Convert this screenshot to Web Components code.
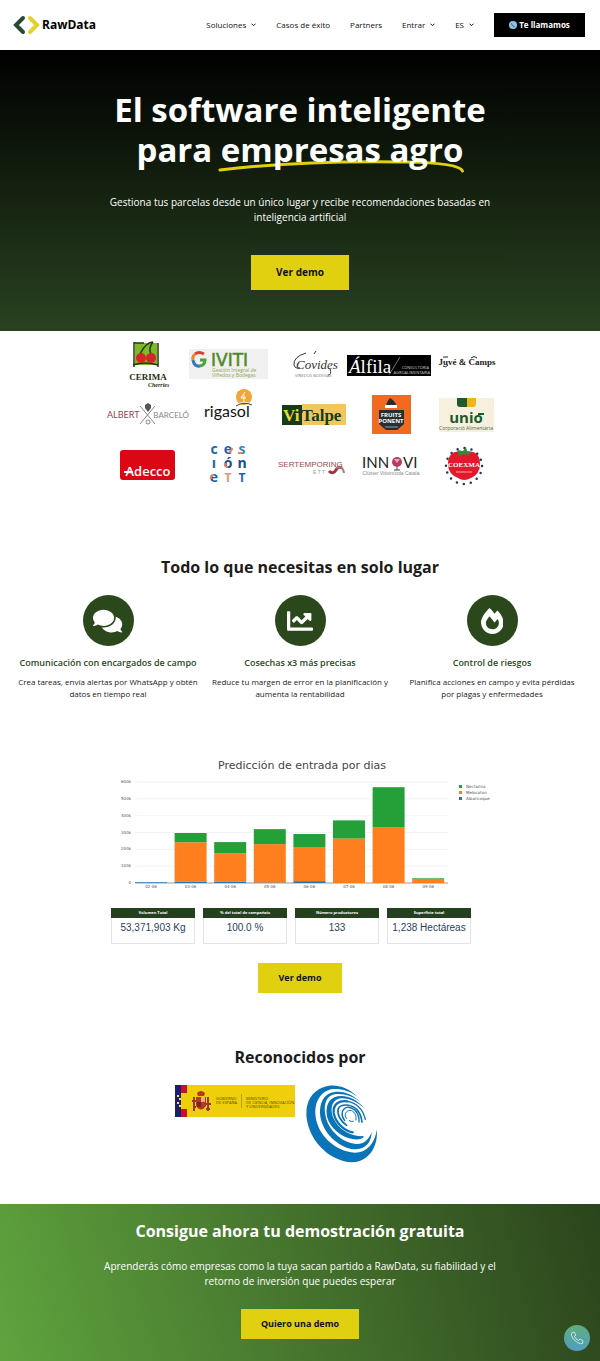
<!DOCTYPE html>
<html lang="es">
<head>
<meta charset="utf-8">
<meta name="viewport" content="width=device-width, initial-scale=1">
<title>RawData</title>
<style>
  body { margin: 0; background: #fff; color: #1c1c1c; font-family: "Open Sans", "Noto Sans", sans-serif; font-size: 10px; }
</style>
</head>
<body>
<raw-page></raw-page>

<template id="raw-page">
  <style>
    :host { display: block; }
    h2 { margin: 0; font-size: 16px; line-height: 24px; font-weight: 700; text-align: center; }
    .features { padding: 66px 12px 0; }
    .cols { display: grid; grid-template-columns: repeat(3, 1fr); margin-top: 16px; }
    .data { padding: 56px 16px 0; display: flex; flex-direction: column; align-items: center; }
    .stats { display: flex; gap: 8px; margin: 16px 18px 19px 0; }
    .known { padding: 52px 16px 41px; }
    .badges { display: flex; justify-content: center; align-items: flex-start; gap: 11px; margin: 16px 48px 0 0; }
    svg { display: block; }
  </style>
  <site-header></site-header>
  <main>
    <hero-banner></hero-banner>
    <client-logos></client-logos>
    <section class="features">
      <h2>Todo lo que necesitas en solo lugar</h2>
      <div class="cols">
        <feature-card>
          <svg slot="icon" height="26" viewBox="0 0 576 512" fill="#fff"><path d="M416 192c0-88.4-93.1-160-208-160S0 103.6 0 192c0 34.3 14.1 65.9 38 92-13.4 30.2-35.5 54.2-35.8 54.5-2.2 2.3-2.8 5.7-1.5 8.7S4.8 352 8 352c36.6 0 66.9-12.3 88.7-25 32.2 15.7 70.3 25 111.3 25 114.9 0 208-71.6 208-160zm122 220c23.9-26 38-57.7 38-92 0-66.9-53.5-124.2-129.3-148.1.9 6.6 1.3 13.3 1.3 20.1 0 105.9-107.7 192-240 192-10.8 0-21.3-.8-31.7-1.9C207.8 439.6 281.8 480 368 480c41 0 79.1-9.2 111.3-25 21.8 12.7 52.1 25 88.7 25 3.2 0 6.1-1.9 7.3-4.8 1.3-2.9.7-6.3-1.5-8.7-.3-.3-22.4-24.2-35.8-54.5z"/></svg>
          <span slot="title">Comunicación con encargados de campo</span>
          Crea tareas, envía alertas por WhatsApp y obtén datos en tiempo real
        </feature-card>
        <feature-card>
          <svg slot="icon" height="26" viewBox="0 0 512 512" fill="#fff"><path d="M496 384H64V80c0-8.840-7.160-16-16-16H16C7.160 64 0 71.160 0 80v336c0 17.670 14.330 32 32 32h464c8.840 0 16-7.160 16-16v-32c0-8.840-7.160-16-16-16zM464 96H345.940c-21.380 0-32.090 25.850-16.970 40.970l32.400 32.400L288 242.750l-73.370-73.370c-12.500-12.500-32.760-12.500-45.250 0l-68.690 68.690c-6.250 6.250-6.250 16.380 0 22.630l22.620 22.620c6.250 6.250 16.380 6.250 22.630 0L192 237.250l73.370 73.370c12.500 12.500 32.760 12.500 45.250 0l96-96 32.400 32.400c15.120 15.120 40.970 4.410 40.970-16.970V112c.01-8.840-7.150-16-15.990-16z"/></svg>
          <span slot="title">Cosechas x3 más precisas</span>
          Reduce tu margen de error en la planificación y aumenta la rentabilidad
        </feature-card>
        <feature-card>
          <svg slot="icon" height="26" viewBox="0 0 448 512" fill="#fff"><path d="M323.560 51.200c-20.800 19.300-39.580 39.590-56.220 59.970C240.080 73.620 206.280 35.530 168 0 69.740 91.170 0 209.960 0 281.600 0 408.850 100.290 512 224 512s224-103.150 224-230.400c0-53.270-51.980-163.140-124.440-230.400zm-19.470 340.650C282.430 407.010 255.720 416 226.860 416 154.710 416 96 368.260 96 290.750c0-38.610 24.310-72.630 72.790-130.750 6.930 7.980 98.830 125.340 98.830 125.340l58.630-66.880c4.140 6.850 7.910 13.550 11.270 19.970 27.350 52.190 15.810 118.970-33.430 153.420z"/></svg>
          <span slot="title">Control de riesgos</span>
          Planifica acciones en campo y evita pérdidas por&nbsp;plagas y enfermedades
        </feature-card>
      </div>
    </section>
    <section class="data">
      <harvest-chart></harvest-chart>
      <div class="stats">
        <stat-card><span slot="label">Volumen Total</span>53,371,903 Kg</stat-card>
        <stat-card><span slot="label">% del total de campañais</span>100.0 %</stat-card>
        <stat-card><span slot="label">Número productores</span>133</stat-card>
        <stat-card><span slot="label">Superficie total</span>1,238 Hectáreas</stat-card>
      </div>
      <cta-link href="#demo">Ver demo</cta-link>
    </section>
    <section class="known">
      <h2>Reconocidos por</h2>
      <div class="badges">
        <svg width="120" height="32" viewBox="0 0 120 32" font-family="Open Sans, sans-serif" font-size="4" fill="#5a4a10">
          <path fill="#efcf0b" d="M0 0h120v32H0z"/><path fill="#1b1f6b" d="M0 0h6v32H0z"/>
          <path fill="#c8102e" d="M6 0h6v8H6zM6 24h6v8H6z"/>
          <path fill="#ffe14a" d="M2 10h2v2H2zM4 13h2v2H4zM2 17h2v2H2zM4 20h2v2H4z"/>
          <path fill="#b03a24" d="M22 8q4-4 8 0l-1 3h-6zM21 12h10v9q-5 7-10 0z"/>
          <path fill="#e9a79a" d="M26 12h4v5h-4z"/><path fill="#7c2424" d="M22 17h4v5h-4z"/>
          <path stroke="#9b3a24" stroke-width="2" fill="none" d="M19 12v14M33 12v14M17 16h4M31 19h5M18 22h3M31 24h4"/>
          <path stroke="#b9a010" stroke-width="1" d="M66.500 9v14"/>
          <text x="41" y="15">GOBIERNO</text><text x="41" y="19">DE ESPAÑA</text>
          <text x="71" y="15">MINISTERIO</text><text x="71" y="19">DE CIENCIA, INNOVACIÓN</text><text x="71" y="23">Y UNIVERSIDADES</text>
        </svg>
        <svg width="72" height="78" viewBox="18 15 216 234" fill="#0b74b8">
          <path d="M172 50C140 18 100 10 70 22C30 36 15 75 20 115C30 190 95 245 155 247C205 247 236 200 230 148C226 190 200 218 165 218C105 215 45 160 46 95C47 50 75 27 105 27C130 27 152 35 172 50Z"/>
          <path d="M184 68C150 36 115 30 90 40C60 52 54 95 66 128C82 174 130 208 168 208C200 206 214 185 215 156C206 180 190 194 168 192C125 188 84 150 76 105C70 70 80 45 108 42C135 40 162 50 184 68Z"/>
          <path d="M194 86C165 52 130 42 103 52C78 62 74 98 86 124C102 158 142 182 178 178Q194 174 190 168C155 172 118 150 102 118C90 92 92 64 116 56C140 50 172 64 194 86Z"/>
          <g fill="none" stroke="#0b74b8" stroke-linecap="round">
            <path stroke-width="7" d="M158 157C130 152 105 125 101 98C99 72 118 60 142 64"/>
            <path stroke-width="4" d="M142 64C168 68 188 86 196 118"/>
            <path stroke-width="5" d="M140 136C122 124 110 104 115 86C122 72 150 70 170 88Q184 104 186 126"/>
            <path stroke-width="4" d="M134 122C122 106 124 88 140 82C158 80 174 94 177 116L177 126"/>
            <path stroke-width="3" d="M140 116C130 104 138 92 150 91C162 92 170 104 168 120M148 122q6 5 12 2"/>
          </g>
        </svg>
      </div>
    </section>
    <demo-banner></demo-banner>
  </main>
</template>

<template id="site-header">
  <style>
    :host { display: block; background: #fff; }
    header { display: flex; align-items: center; justify-content: space-between; height: 50px; padding: 0 15px 0 13px; }
    a { color: #111; text-decoration: none; }
    .brand { display: flex; align-items: center; gap: 2px; font-size: 12px; line-height: 16px; font-weight: 700; color: #000; }
    nav { display: flex; align-items: center; gap: 20px; font-size: 8px; line-height: 12px; }
    nav button { display: flex; align-items: center; gap: 5px; font: inherit; color: #111; background: none; border: 0; padding: 0; }
    .call { display: flex; align-items: center; justify-content: center; gap: 2px; width: 91px; height: 24px; background: #000; color: #fff; font-weight: 700; font-size: 8px; }
    svg { display: block; }
  </style>
  <header>
    <a class="brand" href="#"><svg width="27" height="20" viewBox="0 0 27 20" fill="none" stroke-width="4"><path stroke="#2a4a30" stroke-linecap="round" d="M10 3L3 10l7 7"/><path stroke="#dfd42a" stroke-linecap="round" d="M17 3l7 7-7 7"/></svg>RawData</a>
    <nav>
      <button type="button">Soluciones <svg width="5" height="4" viewBox="0 0 5 4" fill="none" stroke="#111"><path d="M.5.7l2 2 2-2"/></svg></button>
      <a href="#casos">Casos de éxito</a>
      <a href="#partners">Partners</a>
      <button type="button">Entrar <svg width="5" height="4" viewBox="0 0 5 4" fill="none" stroke="#111"><path d="M.5.7l2 2 2-2"/></svg></button>
      <button type="button">ES <svg width="5" height="4" viewBox="0 0 5 4" fill="none" stroke="#111"><path d="M.5.7l2 2 2-2"/></svg></button>
      <a class="call" href="#llamada"><svg width="8" height="8" viewBox="0 0 8 8"><circle cx="4" cy="4" r="4" fill="#8cc4e8"/><path d="M2.500 2.200q0 3 3.200 3.600" fill="none" stroke="#33618c"/></svg>Te llamamos</a>
    </nav>
  </header>
</template>

<template id="hero-banner">
  <style>
    :host { display: block; background: linear-gradient(#000, #294220); color: #fff; text-align: center; }
    section { display: flex; flex-direction: column; align-items: center; padding: 40px 16px 41px; }
    h1 { margin: 0; max-width: 400px; font-size: 33px; line-height: 40px; font-weight: 700; }
    .mark { position: relative; white-space: nowrap; }
    .mark svg { position: absolute; left: -1%; bottom: -1px; width: 102%; height: 14px; }
    .mark span { position: relative; }
    p { margin: 25px 0 30px; max-width: 400px; font-size: 10px; line-height: 15px; }
  </style>
  <section>
    <h1>El software inteligente para <span class="mark"><svg viewBox="0 0 250 14" preserveAspectRatio="none" fill="none" stroke="#e0d010" stroke-width="3" stroke-linecap="round"><path d="M2 11C60 4 130 2 190 3Q244 4 247 12"/></svg><span>empresas agro</span></span></h1>
    <p>Gestiona tus parcelas desde un único lugar y recibe recomendaciones basadas en inteligencia artificial</p>
    <cta-link href="#demo" size="large">Ver demo</cta-link>
  </section>
</template>

<template id="client-logos">
  <style>
    :host { display: block; }
    ul { list-style: none; display: grid; grid-template-columns: 82px 82px 80px 80px 70px; grid-auto-rows: 50px; justify-content: center; margin: 0; padding: 8px 0 0 8px; }
    svg { display: block; overflow: visible; width: 100%; height: 50px; }
  </style>
  <ul>
    <li><svg viewBox="0 0 82 50"><path fill="#7db928" d="M28 4h22v22H28z"/><path fill="none" stroke="#263516" stroke-width="1.500" d="M27 3v25M51 4v24M27 4h10M26 26q12-4 25 0M33 15q6-12 13-12M46 3q-5 6-2 12"/><circle cx="34" cy="19" r="5" fill="#d8232a"/><circle cx="44" cy="19" r="5" fill="#d8232a"/><text x="41" y="41" text-anchor="middle" font-family="Liberation Serif,serif" font-weight="700" font-size="9" fill="#253016">CERIMA</text><text x="41" y="48" font-family="Liberation Serif,serif" font-style="italic" font-weight="700" font-size="6" fill="#253016">Cherries</text></svg></li>
    <li><svg viewBox="0 0 82 50"><path fill="#f0f0f0" d="M0 10h79v30H0z"/><g fill="none" stroke-width="3"><path stroke="#d94030" d="M15 15q-5-3-9 0"/><path stroke="#e88a28" d="M6 15q-3 3-2 6"/><path stroke="#3b78b8" d="M4 21q1 7 7 6"/><path stroke="#4da23c" d="M11 27q5-1 5-6h-5"/></g><text x="22" y="27" font-family="DejaVu Sans,sans-serif" font-size="17" fill="#4d8a25" stroke="#4d8a25" stroke-width=".5">IVITI</text><g font-family="Open Sans,sans-serif" font-size="5" fill="#88a94e"><text x="23" y="33">Gestión Integral de</text><text x="23" y="38">Viñedos y Bodegas</text></g></svg></li>
    <li><svg viewBox="0 0 80 50"><text x="25" y="30" font-family="Liberation Serif,serif" font-style="italic" font-size="13" fill="#333">Covides</text><path fill="none" stroke="#333" d="M35 14q-13 4-12 12 1 4 6 3M43 15l2-3M59 30q2 6-2 6"/><text x="24" y="38" font-family="Open Sans,sans-serif" font-size="4" fill="#777">VIÑEDOS BODEGAS</text></svg></li>
    <li><svg viewBox="0 0 80 50"><path d="M-4 16h84v21H-4z"/><text x="-2" y="34" font-family="Liberation Serif,serif" font-size="19" font-style="italic" fill="#fff">Á<tspan font-style="normal">lfila</tspan></text><path stroke="#bbb" stroke-width=".6" d="M38 36l11-18"/><g font-family="Open Sans,sans-serif" font-size="4" fill="#ccc" text-anchor="end"><text x="78" y="30">CONSULTORIA</text><text x="79" y="35">AGROALIMENTARIA</text></g></svg></li>
    <li><svg viewBox="0 0 70 50"><text x="36" y="26" text-anchor="middle" font-family="Liberation Serif,serif" font-weight="700" font-size="9" fill="#222">Juvé &amp; Camps</text><path fill="none" stroke="#222" d="M12 18h5M12 27q3 2 5-1M40 19q3-3 6 0"/></svg></li>

    <li><svg viewBox="0 0 82 50"><g font-family="Lato,sans-serif" font-size="9"><text x="0" y="29" fill="#8c4554">ALBERT</text><text x="82" y="29" text-anchor="end" font-size="8" fill="#888">BARCELÓ</text></g><path fill="none" stroke="#888" d="M33 17l15 18M48 17L33 35"/><path fill="#555" d="M38 16l3-2 3 2v3l-3 4-3-4z"/><circle cx="41" cy="33" r="2" fill="#fff" stroke="#888"/></svg></li>
    <li><svg viewBox="0 0 82 50"><circle cx="55" cy="8" r="8" fill="#f0a63a"/><path fill="none" stroke="#fff" d="M56 3l-4 6h5M55 6v8M47 16q8-5 15-1"/><path fill="none" stroke="#444" d="M47 17q8-5 16-1"/><text x="15" y="28" font-family="Lato,sans-serif" font-size="16" fill="#111">rigasol</text></svg></li>
    <li><svg viewBox="0 0 80 50"><path fill="#173b17" d="M11 16h20v20H11z"/><path fill="#f2c65c" d="M31 15h44v21H31z"/><text x="12" y="32" font-family="Liberation Serif,serif" font-weight="700" font-size="17" fill="#e8dc3a">Vi<tspan dx="2" fill="#173b17">Talpe</tspan></text></svg></li>
    <li><svg viewBox="0 0 80 50"><path fill="#f26a21" d="M21 6h39v39H21z"/><path fill="#272f30" d="M28 21h25v14l-7 6H35l-7-6zM35 19q0-6 4-10 7 4 6 10z"/><path fill="#fff" d="M34 16h12v3H34z"/><g font-family="Open Sans,sans-serif" font-weight="700" font-size="6" fill="#fff" text-anchor="middle"><text x="40" y="28">FRUITS</text><text x="40" y="34">PONENT</text></g><path stroke="#6cb8a8" d="M34 38h13"/></svg></li>
    <li><svg viewBox="0 0 70 50"><path fill="#f7f0df" d="M8 9h55v34H8z"/><path fill="#1d5a2c" d="M26 9h10v9H29q-3 0-3-3z"/><path fill="#f1b51c" d="M36 9h9v6q0 3-3 3h-6z"/><text x="35" y="34" text-anchor="middle" font-family="Open Sans,sans-serif" font-weight="700" font-size="15" fill="#1d5a2c">unio</text><path stroke="#1d5a2c" stroke-width="2" d="M47 25h6"/><text x="35" y="41" text-anchor="middle" font-family="Open Sans,sans-serif" font-size="5" fill="#456b4a">Corporació Alimentària</text></svg></li>

    <li><svg viewBox="0 0 82 50"><rect x="13" y="11" width="55" height="30" rx="3" fill="#dc0714"/><text x="41" y="37" text-anchor="middle" font-family="Open Sans,sans-serif" font-weight="600" font-size="13" fill="#fff">Adecco</text><path stroke="#fff" stroke-width="2" d="M17 33h9"/></svg></li>
    <li><svg viewBox="0 0 82 50" font-family="Open Sans,sans-serif" font-weight="700" font-size="14" text-anchor="middle" fill="#1e63a8"><text x="25" y="15">c</text><text x="39" y="15">e</text><text x="53" y="15" fill="#3a87b8">s</text><text x="25" y="29">ı</text><text x="39" y="29" fill="#224c83">ó</text><text x="53" y="29" fill="#224c83">n</text><text x="25" y="43">e</text><text x="39" y="43" font-size="12" fill="#e5937c">T</text><text x="53" y="43" font-size="12">T</text><path fill="none" stroke="#e8836c" stroke-width="2" d="M40 13q3-1 3-4M36 24q-1 4 3 4M49 14h4M22 40q-1-4 3-4"/></svg></li>
    <li><svg viewBox="0 0 80 50"><text x="7" y="28" font-family="Liberation Sans,sans-serif" font-size="8" fill="#9a4a52">SERTEMPORING</text><text x="42" y="35" font-family="Liberation Sans,sans-serif" font-size="5" fill="#999">E T T</text><path fill="none" stroke="#a4323c" stroke-width="3" d="M58 32q4 4 7-1 2-4 6-2"/><path fill="none" stroke="#888" stroke-width="2" d="M65 29q7-3 8 5"/></svg></li>
    <li><svg viewBox="0 0 80 50"><g font-family="Lato,sans-serif" font-size="15" fill="#222"><text x="11" y="29">INN</text><text x="52" y="29">VI</text></g><circle cx="46" cy="23" r="5" fill="#b43d66"/><path fill="#e9a7bb" d="M43 20h6l-3 4z"/><path stroke="#444" d="M46 28v3M43 31h6"/><text x="40" y="36" text-anchor="middle" font-family="Liberation Sans,sans-serif" font-size="5" fill="#888">Clúster Vitivinícola Català</text></svg></li>
    <li><svg viewBox="0 0 70 50"><circle cx="33" cy="27" r="18" fill="none" stroke="#24345f" stroke-width="2.500" stroke-dasharray="0 7.070" stroke-linecap="round"/><path fill="#e5182b" d="M33 13q16-3 16 12 0 10-9 14-7 4-13 0-10-4-10-14 0-15 16-12z"/><path fill="#2f8a3b" d="M26 11l6 1 3-4 1 4 5 1-4 3-4-1-5 2z"/><text x="33" y="28" text-anchor="middle" font-family="Liberation Serif,serif" font-weight="700" font-size="7" fill="#fff">COEXMA</text><path stroke="#f5a5a0" d="M25 33h16"/></svg></li>
  </ul>
</template>

<template id="feature-card">
  <style>
    :host { display: flex; flex-direction: column; align-items: center; text-align: center; }
    .disc { display: flex; align-items: center; justify-content: center; width: 51px; height: 51px; border-radius: 50%; background: #2b481d; }
    h3 { margin: 11px 0 7px; font-size: 9px; line-height: 12px; font-weight: 600; color: #2b481d; white-space: nowrap; }
    p { margin: 0; padding: 0 4px; font-size: 8px; line-height: 12px; color: #222; }
  </style>
  <div class="disc"><slot name="icon"></slot></div>
  <h3><slot name="title"></slot></h3>
  <p><slot></slot></p>
</template>

<template id="stat-card">
  <style>
    :host { display: block; width: 84px; height: 36px; box-sizing: border-box; border: 1px solid #e4e4e8; border-top: 0; text-align: center; }
    h3 { margin: 0 -1px; height: 10px; background: #25401f; color: #fff; font: 700 4px/10px "Open Sans", sans-serif; }
    p { margin: 0; font: 10px/20px "Liberation Sans", Arial, sans-serif; color: #2a3f5f; white-space: nowrap; }
  </style>
  <h3><slot name="label"></slot></h3>
  <p><slot></slot></p>
</template>

<template id="cta-link">
  <style>
    :host { display: inline-block; }
    a { display: block; padding: 0 20px; font-size: 9px; line-height: 30px; font-weight: 700; color: #111; background: #e0d010; text-decoration: none; }
    :host([size="large"]) a { padding: 0 25px; font-size: 10px; line-height: 35px; }
  </style>
  <a><slot></slot></a>
</template>

<template id="demo-banner">
  <style>
    :host { display: block; background: linear-gradient(75deg, #5fa33e, #2b441c); color: #fff; text-align: center; }
    section { position: relative; display: flex; flex-direction: column; align-items: center; padding: 15px 16px 22px; }
    h2 { margin: 0; font-size: 16px; line-height: 24px; font-weight: 700; }
    p { margin: 16px 0 20px; max-width: 410px; font-size: 10px; line-height: 15px; }
    button { position: absolute; right: 10px; bottom: 10px; width: 26px; height: 26px; border: 0; padding: 0; border-radius: 50%; background: linear-gradient(#60ad80, #4f9ebf); display: flex; align-items: center; justify-content: center; }
  </style>
  <section>
    <h2>Consigue ahora tu demostración gratuita</h2>
    <p>Aprenderás cómo empresas como la tuya sacan partido a RawData, su fiabilidad y el retorno de inversión que puedes esperar</p>
    <cta-link href="#demo">Quiero una demo</cta-link>
    <button type="button" aria-label="Llamar"><svg width="14" height="14" viewBox="0 0 14 14" fill="none" stroke="#c7e6e6"><path d="M2 1.500l2-.5 2 3-1.500 1.500q1 2.500 4 4L10 8l3 2-.5 2.500q-2 1-5-1-5-3-6-7-.3-2 .5-3z"/></svg></button>
  </section>
</template>

<script>
  const define = (name, setup) => customElements.define(name, class extends HTMLElement {
    constructor() {
      super();
      const root = this.attachShadow({ mode: 'open' });
      const template = document.getElementById(name);
      if (template) root.append(template.content.cloneNode(true));
      if (setup) setup(this, root);
    }
  });

  ['site-header', 'client-logos', 'feature-card', 'stat-card', 'hero-banner', 'demo-banner'].forEach(name => define(name));

  customElements.define('cta-link', class extends HTMLElement {
    constructor() {
      super();
      this.attachShadow({ mode: 'open' }).append(document.getElementById('cta-link').content.cloneNode(true));
    }
    connectedCallback() {
      this.shadowRoot.querySelector('a').href = this.getAttribute('href') || '#';
    }
  });

  // Stacked daily bars, values in thousands of kilos: [day, albaricoque, melocotón, nectarina]
  const DAYS = [
    ['02-06', 4, 0, 0], ['03-06', 9, 233, 55], ['04-06', 9, 168, 66], ['05-06', 3, 228, 89],
    ['06-06', 11, 203, 77], ['07-06', 0, 264, 108], ['08-06', 0, 332, 237], ['09-06', 0, 24, 4]
  ];
  const COLORS = ['#1f77b4', '#ff7f1e', '#259f37'];
  define('harvest-chart', (host, root) => {
    const base = 127, scale = 101 / 600;
    let s = '';
    for (let v = 0; v <= 600; v += 100) {
      const y = base - v * scale;
      s += `<path stroke="${v ? '#f3f3f3' : '#999'}" d="M25 ${y}H338"/><text x="21" y="${y + 1}" text-anchor="end">${v ? v + 'k' : 0}</text>`;
    }
    DAYS.forEach(([day, ...values], i) => {
      const x = 25 + i * 39.6;
      let y = base;
      values.forEach((v, k) => {
        const h = v * scale;
        y -= h;
        if (h) s += `<rect x="${x}" y="${y}" width="32" height="${h}" fill="${COLORS[k]}"/>`;
      });
      s += `<text x="${x + 16}" y="132" text-anchor="middle">${day}</text>`;
    });
    ['Nectarina', 'Melocoton', 'Albaricoque'].forEach((name, i) => {
      s += `<path fill="${COLORS[2 - i]}" d="M349 ${29 + i * 6}h3v3h-3z"/><text x="356" y="${32 + i * 6}">${name}</text>`;
    });
    root.innerHTML = `<style>
      :host { display: block; width: 380px; }
      svg { display: block; width: 100%; font-family: "DejaVu Sans", sans-serif; font-size: 4px; fill: #555; }
      .title { font-size: 11px; fill: #444; }
    </style>
    <svg viewBox="0 0 380 136" role="img" aria-label="Predicción de entrada por dias">
      <text class="title" x="192" y="13" text-anchor="middle">Predicción de entrada por dias</text>${s}
    </svg>`;
  });

  define('raw-page');
</script>
</body>
</html>
